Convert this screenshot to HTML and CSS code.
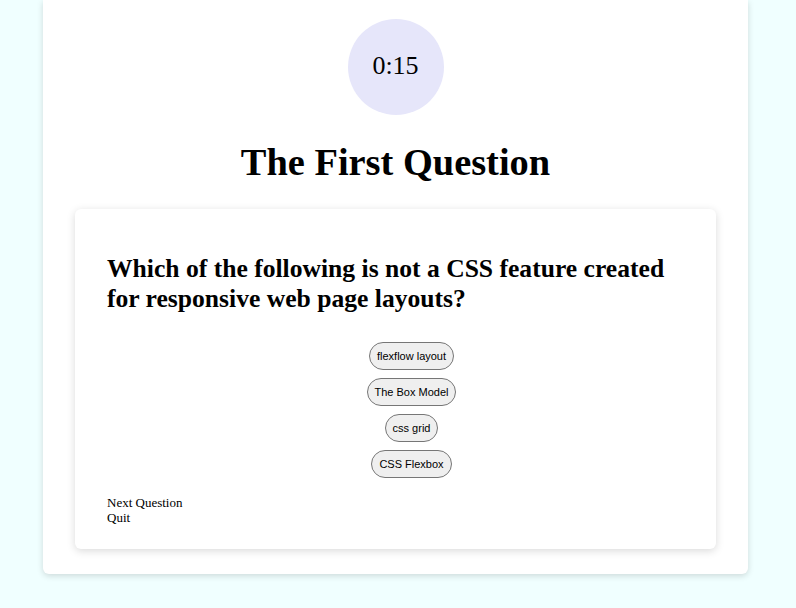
FILE: index.html
```html
<!DOCTYPE html>
<html>
<head>
<meta charset="utf-8">
<link rel="stylesheet" href="styles.css">
</head>
<body>
<div class="page">
  <div class="timer">0:15</div>
  <h1 class="title">The First Question</h1>
  <div class="card">
    <h2 class="question">Which of the following is not a CSS feature created for responsive web page layouts?</h2>
    <div class="answers">
      <button class="answer">flexflow layout</button>
      <button class="answer">The Box Model</button>
      <button class="answer">css grid</button>
      <button class="answer">CSS Flexbox</button>
    </div>
    <div class="controls">
      <button class="link">Next Question</button>
      <button class="link">Quit</button>
    </div>
  </div>
</div>
</body>
</html>
```
FILE: styles.css
```css
html, body {
  margin: 0;
  padding: 0;
}
body {
  background: #f0ffff;
  font-family: "Liberation Serif", "Times New Roman", serif;
  color: #000;
  height: 608px;
  overflow: hidden;
}
.page {
  width: 705px;
  margin-left: 43px;
  background: #fff;
  border-radius: 0 0 6px 6px;
  box-shadow: 0 2px 6px rgba(0, 0, 0, 0.15);
  padding: 19px 32px 25px;
  box-sizing: border-box;
  display: flex;
  flex-direction: column;
  align-items: center;
}
.timer {
  width: 96px;
  height: 96px;
  border-radius: 50%;
  background: #e6e6fa;
  display: flex;
  align-items: center;
  justify-content: center;
  font-size: 26px;
  padding-bottom: 3px;
  box-sizing: border-box;
}
.title {
  font-size: 38.4px;
  margin: 26px 0 26px;
  line-height: 42px;
}
.card {
  align-self: stretch;
  background: #fff;
  border-radius: 6px;
  box-shadow: 0 2px 8px rgba(0, 0, 0, 0.15);
  padding: 45px 32px 24px;
}
.question {
  font-size: 25.6px;
  line-height: 30px;
  margin: 0 0 28px;
}
.answers {
  display: flex;
  flex-direction: column;
  align-items: center;
  gap: 8px;
  padding-left: 32px;
}
.answer {
  font-family: "Liberation Sans", Arial, sans-serif;
  font-size: 11px;
  height: 28px;
  padding: 0 7px;
  background: #efefef;
  border: 1px solid #767676;
  border-radius: 14px;
  color: #000;
}
.controls {
  display: flex;
  flex-direction: column;
  align-items: flex-start;
  margin-top: 17px;
}
.link {
  font-family: "Liberation Serif", "Times New Roman", serif;
  font-size: 13px;
  line-height: 15px;
  background: none;
  border: none;
  padding: 0;
  color: #000;
}
```
